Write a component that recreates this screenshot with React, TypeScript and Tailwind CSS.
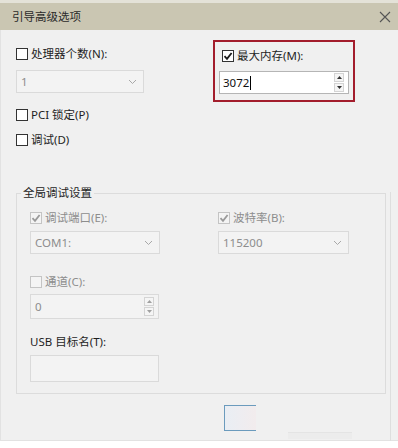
import React from "react";

type BoxProps = { checked?: boolean; disabled?: boolean };

function CheckBox({ checked, disabled }: BoxProps) {
  return (
    <span
      className={`flex h-[12px] w-[12px] shrink-0 items-center justify-center border ${
        disabled ? "border-[#c4c4c4] bg-[#f4f4f4]" : "border-[#333333] bg-white"
      }`}
    >
      {checked && (
        <svg width="10" height="10" viewBox="0 0 10 10">
          <path
            d="M1.5 5.2 L4 7.8 L8.6 2"
            fill="none"
            stroke={disabled ? "#9a9a9a" : "#1a1a1a"}
            strokeWidth="1.8"
          />
        </svg>
      )}
    </span>
  );
}

function CheckRow({ label, checked, disabled }: { label: string } & BoxProps) {
  return (
    <div className="flex h-[14px] items-center gap-[3px]">
      <CheckBox checked={checked} disabled={disabled} />
      <span className={disabled ? "text-[#8d8d8d]" : "text-[#1e1e1e]"}>{label}</span>
    </div>
  );
}

function Select({ value, w }: { value: string; w: string }) {
  return (
    <div
      className={`flex h-[23px] ${w} items-center justify-between border border-[#dadada] bg-[#f3f3f3] pl-[4px] pr-[6px] text-[#8d8d8d]`}
    >
      <span>{value}</span>
      <svg width="9" height="6" viewBox="0 0 9 6">
        <path d="M1 1 L4.5 4.5 L8 1" fill="none" stroke="#a8a8a8" strokeWidth="1" />
      </svg>
    </div>
  );
}

function Spinner({ disabled }: { disabled?: boolean }) {
  const c = disabled ? "#a0a0a0" : "#333";
  return (
    <div className="flex flex-col gap-[1px]">
      <div className="flex h-[9px] w-[10px] items-center justify-center border border-[#d4d4d4] bg-[#f5f5f5]">
        <svg width="5" height="3" viewBox="0 0 5 3">
          <path d="M0 3 L2.5 0 L5 3 Z" fill={c} />
        </svg>
      </div>
      <div className="flex h-[9px] w-[10px] items-center justify-center border border-[#d4d4d4] bg-[#f5f5f5]">
        <svg width="5" height="3" viewBox="0 0 5 3">
          <path d="M0 0 L2.5 3 L5 0 Z" fill={c} />
        </svg>
      </div>
    </div>
  );
}

export default function App() {
  return (
    <div className="h-[448px] w-[398px] overflow-hidden bg-white font-['Noto_Sans','Noto_Sans_CJK_SC',sans-serif] text-[11.5px] leading-none">
      {/* title bar */}
      <div className="flex h-[30px] items-center justify-between border-t-[3px] border-[#e4e2d8] bg-[#cac6b2] pl-[12px] pr-[7px]">
        <span className="text-[11.5px] text-[#2a2a2a]">引导高级选项</span>
        <svg width="12" height="12" viewBox="0 0 12 12">
          <path d="M1 1 L11 11 M11 1 L1 11" stroke="#555" strokeWidth="1.1" />
        </svg>
      </div>

      {/* body */}
      <div className="flex h-[411px] border-b border-l border-[#e2e2e2] bg-[#f0f0f0]">
        <div className="w-[378px] pl-[11px] pt-[10px]">
          <div className="flex items-start">
            <div className="flex w-[201px] flex-col pl-[4px] pt-[7px]">
              <CheckRow label="处理器个数(N):" />
              <div className="mt-[9px]">
                <Select value="1" w="w-[128px]" />
              </div>
            </div>
            <div className="flex w-[142px] flex-col border-2 border-[#a31d2c] pb-[6px] pl-[7px] pt-[7px]">
              <CheckRow label="最大内存(M):" checked />
              <div className="ml-[-3px] mt-[8px] flex h-[23px] w-[130px] items-center justify-between border border-[#b5b5b5] bg-white pl-[3px] pr-[4px]">
                <span className="flex items-center text-[#111]">
                  3072
                  <span className="ml-[1px] inline-block h-[14px] w-[1px] bg-black" />
                </span>
                <Spinner />
              </div>
            </div>
          </div>

          <div className="mt-[6px] flex flex-col gap-[11px] pl-[4px]">
            <CheckRow label="PCI 锁定(P)" />
            <CheckRow label="调试(D)" />
          </div>

          {/* group box */}
          <div className="relative ml-[4px] mt-[46px] h-[201px] w-[370px] border border-[#dcdcdc]">
            <span className="absolute left-[4px] top-[-7px] bg-[#f0f0f0] px-[2px] text-[#1e1e1e]">全局调试设置</span>
            <div className="flex pl-[13px] pt-[17px]">
              <div className="flex w-[188px] flex-col">
                <CheckRow label="调试端口(E):" checked disabled />
                <div className="mt-[6px]">
                  <Select value="COM1:" w="w-[130px]" />
                </div>
              </div>
              <div className="flex flex-col">
                <CheckRow label="波特率(B):" checked disabled />
                <div className="mt-[6px]">
                  <Select value="115200" w="w-[131px]" />
                </div>
              </div>
            </div>
            <div className="flex flex-col pl-[13px]">
              <div className="mt-[21px]">
                <CheckRow label="通道(C):" disabled />
              </div>
              <div className="mt-[5px] flex h-[25px] w-[129px] items-center justify-between border border-[#dadada] bg-[#f3f3f3] pl-[4px] pr-[4px] text-[#8d8d8d]">
                <span>0</span>
                <Spinner disabled />
              </div>
              <span className="mt-[17px] text-[#1e1e1e]">USB 目标名(T):</span>
              <div className="mt-[7px] h-[27px] w-[129px] border border-[#dadada] bg-[#f3f3f3]" />
            </div>
          </div>

          {/* dialog buttons */}
          <div className="flex pl-[212px] pt-[11px]">
            <div className="h-[26px] w-[32px] border border-r-0 border-[#6b9bbd] bg-gradient-to-r from-[#e9eef4] to-[#f2eced]" />
            <div className="ml-[32px] mt-[27px] h-[7px] w-[64px] border-t border-[#e4e4e4] bg-[#ececec]" />
          </div>
        </div>
        <div className="ml-[11px] mt-[162px] h-[249px] w-[1px] bg-[#dedede]" />
      </div>
    </div>
  );
}
